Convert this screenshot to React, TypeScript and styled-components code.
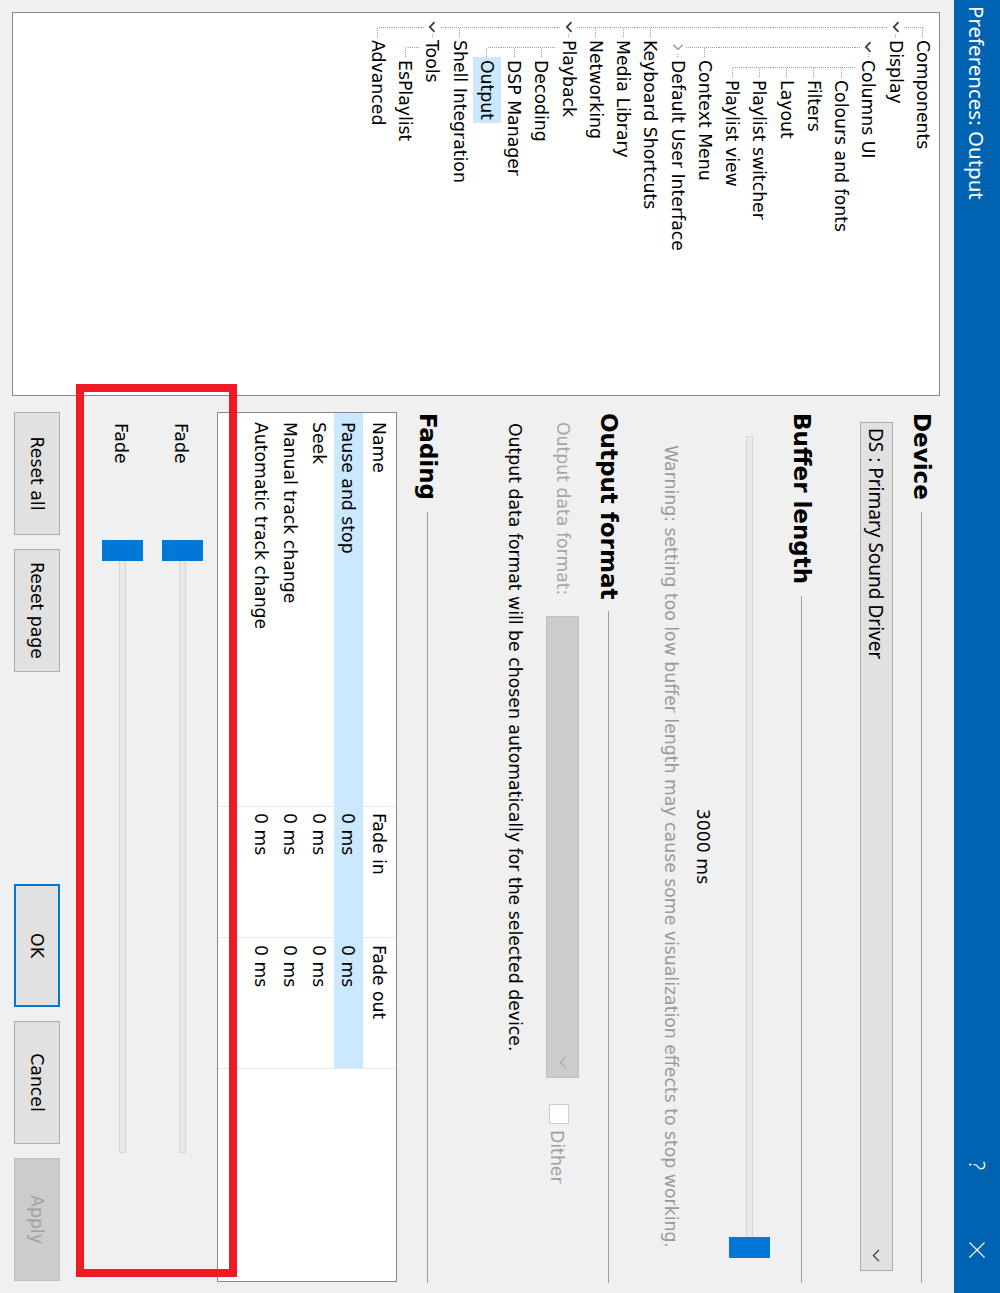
import React from 'react';
import styled, { createGlobalStyle, css } from 'styled-components';

const Global = createGlobalStyle`
  html, body { margin: 0; padding: 0; background: #F0F0F0; overflow: hidden; }
  #root { width: 1000px; height: 1293px; }
`;

const Stage = styled.div`
  width: 1000px;
  height: 1293px;
  overflow: hidden;
  background: #F0F0F0;
`;

const Dialog = styled.div`
  position: relative;
  width: 1293px;
  height: 1000px;
  transform-origin: 0 0;
  transform: translateX(1000px) rotate(90deg);
  background: #F0F0F0;
  display: flex;
  flex-direction: column;
  font-family: "DejaVu Sans", Verdana, sans-serif;
  font-size: 17.3px;
  color: #000;
`;

const TitleBar = styled.div`
  flex: none;
  height: 46px;
  background: #0063B1;
  color: #fff;
  display: flex;
  align-items: center;
`;

const Title = styled.div`
  flex: 1;
  padding-left: 6px;
  font-family: "Segoe UI", "Noto Sans", sans-serif;
  font-size: 20.5px;
`;

const CaptionBtn = styled.div<{ $w: number }>`
  width: ${(p) => p.$w}px;
  height: 100%;
  display: flex;
  align-items: center;
  justify-content: center;
  font-family: "Segoe UI", "Noto Sans", sans-serif;
  font-size: 21px;
  font-weight: 300;
`;

const Body = styled.div`
  flex: 1;
  display: flex;
  gap: 16px;
  padding: 14px 10px 12px 12px;
`;

/* ---------- tree ---------- */

const TreePanel = styled.div`
  width: 384px;
  height: 928px;
  box-sizing: border-box;
  border: 1px solid #828790;
  background: #fff;
  padding: 2.4px 0 0 7px;
  overflow: hidden;
`;

const TreeRow = styled.div`
  height: 27.25px;
  display: flex;
  align-items: stretch;
`;

type Guide = 'pipe' | 'tee' | 'elbow' | 'first';

const DOT_V = 'repeating-linear-gradient(to bottom, #A0A0A0 0 1px, transparent 1px 2px)';
const DOT_H = 'repeating-linear-gradient(to right, #A0A0A0 0 1px, transparent 1px 2px)';

const guideStyle = (g: Guide) => {
  switch (g) {
    case 'pipe':
      return css`
        background-image: ${DOT_V};
        background-size: 1px 100%;
        background-position: 7px 0;
      `;
    case 'tee':
      return css`
        background-image: ${DOT_V}, ${DOT_H};
        background-size: 1px 100%, 10px 1px;
        background-position: 7px 0, 8px 50%;
      `;
    case 'elbow':
      return css`
        background-image: ${DOT_V}, ${DOT_H};
        background-size: 1px 50%, 10px 1px;
        background-position: 7px 0, 8px 50%;
      `;
    case 'first':
      return css`
        background-image: ${DOT_V}, ${DOT_H};
        background-size: 1px 50%, 10px 1px;
        background-position: 7px 100%, 8px 50%;
      `;
  }
};

const GuideCell = styled.div<{ $g: Guide }>`
  flex: none;
  width: 20px;
  display: flex;
  align-items: center;
  background-repeat: no-repeat;
  ${(p) => guideStyle(p.$g)}
`;

const Twisty = styled.div`
  width: 14px;
  height: 17px;
  background: #fff;
  display: flex;
  align-items: center;
  justify-content: center;
`;

const TreeLabel = styled.div<{ $sel?: boolean }>`
  align-self: center;
  margin-left: -3px;
  padding: 0 3px;
  height: 28px;
  display: flex;
  align-items: center;
  white-space: nowrap;
  background: ${(p) => (p.$sel ? '#CCE8FF' : 'transparent')};
`;

const ChevOpen = () => (
  <svg width="12" height="8" viewBox="0 0 12 8">
    <path d="M1.2 1.5 L6 6.2 L10.8 1.5" fill="none" stroke="#404040" strokeWidth="1.8" />
  </svg>
);
const ChevClosed = () => (
  <svg width="8" height="12" viewBox="0 0 8 12">
    <path d="M1.8 1.2 L6.4 6 L1.8 10.8" fill="none" stroke="#A6A6A6" strokeWidth="1.6" />
  </svg>
);

interface TreeNode {
  label: string;
  guides: Guide[];
  twisty?: 'open' | 'closed';
  sel?: boolean;
}

const treeData: TreeNode[] = [
  { label: 'Components', guides: ['first'] },
  { label: 'Display', guides: ['tee'], twisty: 'open' },
  { label: 'Columns UI', guides: ['pipe', 'first'], twisty: 'open' },
  { label: 'Colours and fonts', guides: ['pipe', 'pipe', 'tee'] },
  { label: 'Filters', guides: ['pipe', 'pipe', 'tee'] },
  { label: 'Layout', guides: ['pipe', 'pipe', 'tee'] },
  { label: 'Playlist switcher', guides: ['pipe', 'pipe', 'tee'] },
  { label: 'Playlist view', guides: ['pipe', 'pipe', 'elbow'] },
  { label: 'Context Menu', guides: ['pipe', 'tee'] },
  { label: 'Default User Interface', guides: ['pipe', 'elbow'], twisty: 'closed' },
  { label: 'Keyboard Shortcuts', guides: ['tee'] },
  { label: 'Media Library', guides: ['tee'] },
  { label: 'Networking', guides: ['tee'] },
  { label: 'Playback', guides: ['tee'], twisty: 'open' },
  { label: 'Decoding', guides: ['pipe', 'tee'] },
  { label: 'DSP Manager', guides: ['pipe', 'tee'] },
  { label: 'Output', guides: ['pipe', 'elbow'], sel: true },
  { label: 'Shell Integration', guides: ['tee'] },
  { label: 'Tools', guides: ['tee'], twisty: 'open' },
  { label: 'EsPlaylist', guides: ['pipe', 'elbow'] },
  { label: 'Advanced', guides: ['elbow'] },
];

/* ---------- right side ---------- */

const RightCol = styled.div`
  width: 871px;
  display: flex;
  flex-direction: column;
`;

const SectionHeader = styled.div<{ $mt: number }>`
  margin-top: ${(p) => p.$mt}px;
  height: 28px;
  display: flex;
  align-items: center;
  gap: 12px;
`;

const HeadingText = styled.div`
  margin-left: 1px;
  font-family: "DejaVu Sans", Verdana, sans-serif;
  font-weight: bold;
  font-size: 23px;
  white-space: nowrap;
`;

const Rule = styled.div`
  flex: 1;
  height: 1px;
  background: #A0A0A0;
`;

const Combo = styled.div<{ $disabled?: boolean; $w: number }>`
  box-sizing: border-box;
  width: ${(p) => p.$w}px;
  height: 33px;
  display: flex;
  align-items: center;
  justify-content: space-between;
  padding: 0 8px 0 5px;
  background: ${(p) => (p.$disabled ? '#CCCCCC' : '#E1E1E1')};
  border: 1px solid ${(p) => (p.$disabled ? '#BFBFBF' : '#ADADAD')};
  font-family: "Segoe UI", "Noto Sans", sans-serif;
  font-size: 19px;
`;

const DeviceCombo = styled(Combo)`
  margin-top: 15px;
  margin-left: 10px;
`;

const SliderBox = styled.div<{ $mt: number; $ml: number; $w: number }>`
  margin-top: ${(p) => p.$mt}px;
  margin-left: ${(p) => p.$ml}px;
  width: ${(p) => p.$w}px;
  height: 41px;
  display: grid;
  grid-template-areas: 'stack';
`;

const Track = styled.div`
  grid-area: stack;
  align-self: center;
  height: 7px;
  box-sizing: border-box;
  border: 1px solid #D6D6D6;
  background: #E7EAEA;
`;

const Thumb = styled.div<{ $at: 'start' | 'end' }>`
  grid-area: stack;
  justify-self: ${(p) => p.$at};
  width: 21px;
  height: 41px;
  background: #0078D7;
`;

const CenterText = styled.div<{ $mt: number; $gray?: boolean }>`
  margin-top: ${(p) => p.$mt}px;
  margin-left: 10px;
  width: 849px;
  height: 20px;
  line-height: 20px;
  text-align: center;
  white-space: nowrap;
  color: ${(p) => (p.$gray ? '#9A9A9A' : '#000')};
`;

const FormatRow = styled.div`
  margin-top: 16px;
  height: 32px;
  display: flex;
  align-items: center;
`;

const FormatLabel = styled.div`
  width: 194px;
  margin-left: 10px;
  color: #A6A6A6;
  white-space: nowrap;
`;

const CheckWrap = styled.div`
  align-self: flex-start;
  margin-top: 10px;
  margin-left: 26px;
  display: flex;
  align-items: flex-start;
  gap: 6px;
`;

const CheckBox = styled.div`
  width: 20px;
  height: 20px;
  box-sizing: border-box;
  border: 1px solid #CCCCCC;
  background: #fff;
`;

const CheckLabel = styled.div`
  padding-top: 2px;
  color: #A0A0A0;
`;

const InfoText = styled.div`
  margin-top: 22px;
  margin-left: 11px;
  height: 20px;
  line-height: 20px;
  white-space: nowrap;
`;

const LINE = '#E3EAF1';

const Table = styled.div`
  margin-top: 17px;
  width: 870px;
  height: 180px;
  box-sizing: border-box;
  border: 1px solid #828790;
  background-color: #fff;
  background-image: linear-gradient(${LINE}, ${LINE}), linear-gradient(${LINE}, ${LINE}),
    linear-gradient(${LINE}, ${LINE});
  background-size: 1px 100%;
  background-repeat: no-repeat;
  background-position: 393px 0, 524px 0, 655px 0;
`;

const TRow = styled.div<{ $h: number }>`
  display: grid;
  grid-template-columns: 393px 131px 131px;
  height: ${(p) => p.$h}px;
`;

const TCell = styled.div<{ $sel?: boolean; $pl: number }>`
  display: flex;
  align-items: center;
  padding-left: ${(p) => p.$pl}px;
  white-space: nowrap;
  background: ${(p) => (p.$sel ? '#CCE8FF' : 'transparent')};
`;

const FadeRow = styled.div<{ $mt: number }>`
  margin-top: ${(p) => p.$mt}px;
  height: 41px;
  display: flex;
  align-items: center;
`;

const FadeLabel = styled.div`
  width: 128px;
  box-sizing: border-box;
  padding-left: 11px;
  padding-top: 3px;
`;

const ButtonRow = styled.div`
  margin-top: 42px;
  display: flex;
  gap: 14px;
  padding-right: 2px;
`;

const Spacer = styled.div`
  flex: 1;
`;

type BtnKind = 'normal' | 'primary' | 'disabled';

const Btn = styled.div<{ $kind?: BtnKind }>`
  width: 123px;
  height: 46px;
  box-sizing: border-box;
  display: flex;
  align-items: center;
  justify-content: center;
  background: ${(p) => (p.$kind === 'disabled' ? '#CCCCCC' : '#E1E1E1')};
  border: ${(p) =>
    p.$kind === 'primary'
      ? '2px solid #0078D7'
      : p.$kind === 'disabled'
      ? '1px solid #BFBFBF'
      : '1px solid #ADADAD'};
  color: ${(p) => (p.$kind === 'disabled' ? '#A0A0A0' : '#000')};
`;

const Annotation = styled.div`
  position: absolute;
  left: 384px;
  top: 763px;
  width: 893px;
  height: 161px;
  box-sizing: border-box;
  border: 8px solid #ED1C24;
  pointer-events: none;
`;

const ComboChevron = ({ color }: { color: string }) => (
  <svg width="13" height="8" viewBox="0 0 13 8">
    <path d="M0.8 1 L6.5 6.6 L12.2 1" fill="none" stroke={color} strokeWidth="1.2" />
  </svg>
);

const CloseIcon = () => (
  <svg width="16" height="16" viewBox="0 0 16 16">
    <path d="M0.5 0.5 L15.5 15.5 M15.5 0.5 L0.5 15.5" stroke="#fff" strokeWidth="1.1" />
  </svg>
);

const rows = [
  { name: 'Pause and stop', sel: true },
  { name: 'Seek' },
  { name: 'Manual track change' },
  { name: 'Automatic track change' },
];

export default function App() {
  return (
    <Stage>
      <Global />
      <Dialog>
        <TitleBar>
          <Title>Preferences: Output</Title>
          <CaptionBtn $w={83}>?</CaptionBtn>
          <CaptionBtn $w={86}>
            <CloseIcon />
          </CaptionBtn>
        </TitleBar>
        <Body>
          <TreePanel>
            {treeData.map((n) => (
              <TreeRow key={n.label}>
                {n.guides.map((g, i) => (
                  <GuideCell key={i} $g={g}>
                    {i === n.guides.length - 1 && n.twisty && (
                      <Twisty>{n.twisty === 'open' ? <ChevOpen /> : <ChevClosed />}</Twisty>
                    )}
                  </GuideCell>
                ))}
                <TreeLabel $sel={n.sel}>{n.label}</TreeLabel>
              </TreeRow>
            ))}
          </TreePanel>
          <RightCol>
            <SectionHeader $mt={4}>
              <HeadingText>Device</HeadingText>
              <Rule />
            </SectionHeader>
            <DeviceCombo $w={849}>
              <span>DS : Primary Sound Driver</span>
              <ComboChevron color="#333" />
            </DeviceCombo>

            <SectionHeader $mt={44}>
              <HeadingText>Buffer length</HeadingText>
              <Rule />
            </SectionHeader>
            <SliderBox $mt={18} $ml={24} $w={822}>
              <Track />
              <Thumb $at="end" />
            </SliderBox>
            <CenterText $mt={16}>3000 ms</CenterText>
            <CenterText $mt={12} $gray>
              Warning: setting too low buffer length may cause some visualization effects to stop working.
            </CenterText>

            <SectionHeader $mt={38}>
              <HeadingText>Output format</HeadingText>
              <Rule />
            </SectionHeader>
            <FormatRow>
              <FormatLabel>Output data format:</FormatLabel>
              <Combo $disabled $w={462}>
                <span />
                <ComboChevron color="#A6A6A6" />
              </Combo>
              <CheckWrap>
                <CheckBox />
                <CheckLabel>Dither</CheckLabel>
              </CheckWrap>
            </FormatRow>
            <InfoText>Output data format will be chosen automatically for the selected device.</InfoText>

            <SectionHeader $mt={63}>
              <HeadingText>Fading</HeadingText>
              <Rule />
            </SectionHeader>
            <Table>
              <TRow $h={33}>
                <TCell $pl={9}>Name</TCell>
                <TCell $pl={7}>Fade in</TCell>
                <TCell $pl={8}>Fade out</TCell>
              </TRow>
              {rows.map((r) => (
                <TRow key={r.name} $h={29}>
                  <TCell $pl={9} $sel={r.sel}>{r.name}</TCell>
                  <TCell $pl={7} $sel={r.sel}>0 ms</TCell>
                  <TCell $pl={8} $sel={r.sel}>0 ms</TCell>
                </TRow>
              ))}
            </Table>
            <FadeRow $mt={14}>
              <FadeLabel>Fade</FadeLabel>
              <SliderBox $mt={0} $ml={0} $w={613}>
                <Track />
                <Thumb $at="start" />
              </SliderBox>
            </FadeRow>
            <FadeRow $mt={19}>
              <FadeLabel>Fade</FadeLabel>
              <SliderBox $mt={0} $ml={0} $w={613}>
                <Track />
                <Thumb $at="start" />
              </SliderBox>
            </FadeRow>

            <ButtonRow>
              <Btn>Reset all</Btn>
              <Btn>Reset page</Btn>
              <Spacer />
              <Btn $kind="primary">OK</Btn>
              <Btn>Cancel</Btn>
              <Btn $kind="disabled">Apply</Btn>
            </ButtonRow>
          </RightCol>
        </Body>
        <Annotation />
      </Dialog>
    </Stage>
  );
}
